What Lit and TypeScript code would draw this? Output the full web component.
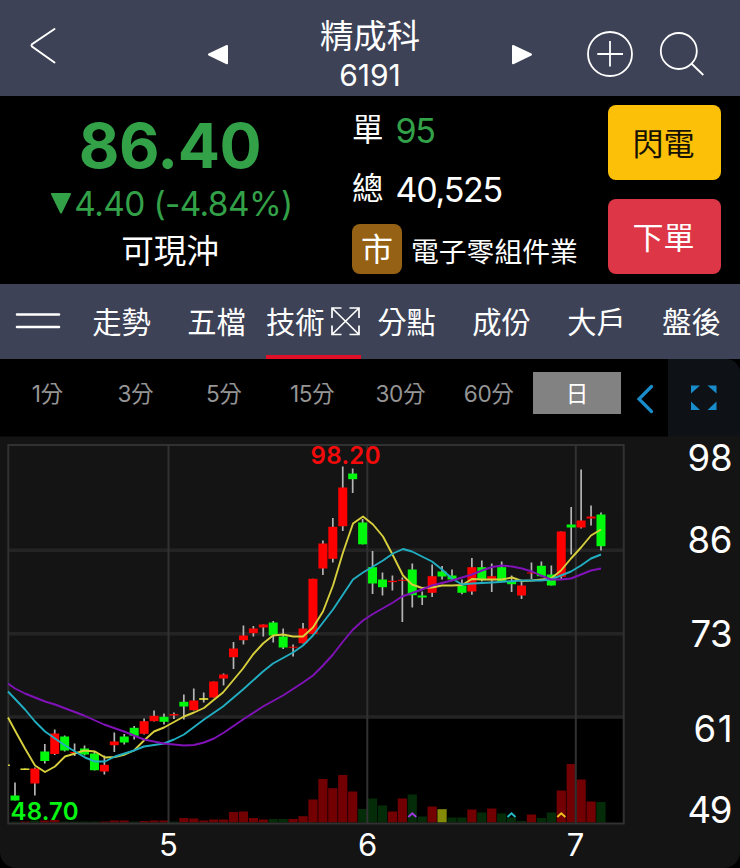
import { LitElement, html, svg, css } from "lit";
import { customElement } from "lit/decorators.js";
import { classMap } from "lit/directives/class-map.js";

type Kind = "r" | "g" | "y";
// [kind, body top, body bottom, high, low, volume kind, volume top]
type Candle = [Kind, number, number, number, number, Kind, number];

const CANDLES: Candle[] = [
  ["g", 795, 800, 782, 800, "g", 821],
  ["y", 768, 769.4, 768, 769, "r", 821],
  ["r", 768, 783, 767, 795, "g", 820],
  ["g", 751, 760.5, 743.5, 763, "r", 820],
  ["r", 733, 753.5, 729, 754.5, "r", 819.5],
  ["g", 736, 750, 735, 751, "g", 821],
  ["r", 751.5, 752.5, 743, 755.5, "g", 821],
  ["g", 748, 754, 745, 755, "g", 821],
  ["g", 753, 769.7, 751, 770, "g", 821],
  ["r", 764.3, 771, 755, 774, "r", 821],
  ["r", 741, 744.7, 732, 751.5, "r", 820],
  ["g", 736, 742, 733.5, 744, "r", 820],
  ["g", 727.3, 735.3, 725.5, 739, "g", 821],
  ["r", 720.7, 733.3, 718, 734, "r", 820.5],
  ["r", 715.3, 720.7, 710, 721, "r", 820],
  ["g", 716.3, 721.3, 713, 724, "r", 820],
  ["r", 713.6, 715, 712, 718.5, "g", 821],
  ["g", 701.3, 706, 694, 719, "r", 817.5],
  ["r", 700, 709.7, 688, 710, "r", 818],
  ["y", 697.7, 699.3, 692, 702, "r", 820],
  ["r", 681, 697, 681, 697, "r", 819],
  ["r", 674, 678, 673, 685, "r", 819],
  ["r", 648, 656.7, 641.5, 668.5, "r", 811.5],
  ["r", 635, 639.7, 625, 644, "r", 811],
  ["r", 628, 632.7, 625.5, 636, "r", 817.5],
  ["r", 624, 627, 624, 636, "r", 819],
  ["g", 622, 635, 620.5, 642, "g", 818.5],
  ["g", 636, 647, 628, 648.5, "g", 818.5],
  ["r", 646.2, 647.2, 644, 656, "r", 818.5],
  ["r", 628, 642.7, 622.5, 643, "r", 815.7],
  ["r", 578.3, 633.5, 578.3, 634, "r", 799],
  ["r", 543, 568, 540, 574.5, "r", 778.5],
  ["r", 526.3, 558.3, 517.5, 562, "r", 787.7],
  ["r", 487, 525.7, 466, 530.5, "r", 774.5],
  ["g", 473, 478.7, 468, 492.5, "r", 791],
  ["g", 522, 543.8, 518.5, 544, "g", 808.5],
  ["g", 566.7, 583, 550.5, 593.5, "g", 798],
  ["g", 579, 586.7, 572, 595, "g", 805],
  ["r", 580.3, 581.6, 575, 590, "r", 811],
  ["r", 579.3, 580.3, 577, 621.5, "r", 798],
  ["g", 569, 594.7, 563, 607, "g", 794],
  ["g", 595, 597, 591, 604.5, "g", 816],
  ["r", 575.7, 592.3, 564, 596.5, "r", 806],
  ["g", 571, 576, 565.5, 579, "y", 808.7],
  ["g", 575, 579, 569, 579, "g", 817],
  ["g", 585, 592.3, 579, 593.7, "g", 817],
  ["r", 566.7, 591, 557.5, 594.3, "r", 809],
  ["g", 566.7, 579.7, 560, 581, "g", 812],
  ["r", 575.7, 579.7, 563, 591.5, "r", 808],
  ["g", 566.7, 581, 561, 581, "g", 813],
  ["g", 581, 583.7, 575, 591.5, "g", 817],
  ["r", 585, 595, 580, 598.5, "g", 820.5],
  ["r", 572, 573, 562, 578.5, "r", 814],
  ["g", 565.3, 575.7, 561, 576, "g", 817.5],
  ["g", 574, 585, 565, 585, "g", 812],
  ["r", 531, 576.3, 531, 579, "r", 790],
  ["g", 524, 527, 506.5, 554, "r", 763.5],
  ["r", 520, 527, 469, 528, "r", 779],
  ["r", 516, 518, 505, 525, "r", 801],
  ["g", 514, 545.7, 512, 550, "g", 801.5],
];

const MA_SHORT = "8,717 15,730 25,748 35,765 45,771.5 55,766 65,756 75,753 84,750 95,751 105,757 115,756.5 125,754 134,750 144,740 154,731 164,727 174,721.5 184,716 194,712 204,707.5 213,700 223,692 233,680 243,668 253,654 263,643 273,635 283,634 293,636 303,636 313,627 323,611 333,585 343,552 353,523 363,516 373,524 383,536 393,555 403,575 412,584 422,587.5 432,587 442,585 452,585 462,584.5 472,578.5 482,579 502,579 512,577 522,580.5 532,580 551,578 561,570 571,558 581,547 591,535 601,529";
const MA_MID = "8,691 25,709 35,721 45,731 55,738 65,745 75,751 85,757 95,761 105,761 115,756 134,750 144,746 164,743 174,739 184,734 204,719 223,706 243,689 263,671 273,663 293,652 303,645 313,635 323,622 333,609 343,594 353,579 363,572 373,566 383,560 393,553 403,548.5 412,551 432,561 442,569 452,578 462,584 472,583 492,582 522,580 541,580 551,579 561,575 571,571 581,565 591,558 601,554";
const MA_LONG = "8,683 15,688 25,693 45,701 55,704 84,715 104,724 124,731 144,739 164,743 184,745 194,744.5 204,742 214,738 224,732 243,719 263,706 283,695 303,682 313,675 323,665 333,654 343,641 353,629 363,620 372,614 393,602 402,596 422,589 432,585 452,580 472,574 482,570 492,566.5 502,565 512,566 522,568 532,571 541,575 551,579 561,579 571,578 581,574 591,570 601,568";

const BODY = { r: "#fe0000", g: "#00f80c", y: "#f4f03a" };
const VOLUME = { r: "#720003", g: "#042c08", y: "#858a07" };
const xOf = (i: number) => 15 + i * 9.932;

@customElement("stock-header")
class StockHeader extends LitElement {
  static styles = css`
    :host { display: grid; grid-template-columns: 180px 76px 228px 76px 180px; height: 95.5px; background: #3d4256; color: #fff; }
    .title { display: flex; flex-direction: column; align-items: center; padding-top: 16px; }
    .name { font-size: 33.4px; line-height: 40px; }
    .code { font-size: 30px; line-height: 38px; }
    svg { display: block; fill: none; stroke: #fff; }
    .solid { fill: #fff; stroke-linejoin: round; stroke-width: 2; }
  `;
  render() {
    return html`
      <svg width="180" height="95"><path d="M54.5 29 32 44.2Q31 45.5 32 46.6L54.5 62.5" stroke-width="2" stroke-linecap="round"/></svg>
      <svg class="solid" width="76" height="95"><path d="M29 54.5 47 46V63.3Z"/></svg>
      <div class="title"><div class="name">精成科</div><div class="code">6191</div></div>
      <svg class="solid" width="76" height="95"><path d="M47 54.5 29 46V63.3Z"/></svg>
      <svg width="180" height="95" stroke-width="1.8">
        <circle cx="50" cy="54" r="22"/><path d="M50 41V66.5M37.3 54H63"/>
        <circle cx="118.8" cy="51" r="18"/><path d="M131.4 63.5 143.3 75"/>
      </svg>`;
  }
}

@customElement("stock-quote")
class StockQuote extends LitElement {
  static styles = css`
    :host { display: grid; grid-template-columns: 342px 266px 113px; height: 188px; background: #000; color: #fff; }
    .price { display: flex; flex-direction: column; align-items: center; color: #33a148; padding-top: 8px; }
    .last { font-size: 62.5px; line-height: 82px; font-weight: 700; letter-spacing: -0.4px; margin-right: 2px; }
    .change { display: flex; align-items: center; font-size: 33.4px; line-height: 36px; letter-spacing: -0.6px; white-space: pre; }
    .flag { color: #fff; font-size: 32.6px; line-height: 40px; margin-top: 9px; margin-right: 2px; }
    .info { display: flex; flex-direction: column; padding: 10px 0 0 10px; }
    .row { display: flex; align-items: center; gap: 12px; height: 50px; font-size: 31.5px; }
    .label { line-height: 40px; margin-bottom: 1px; }
    .total { margin-top: 9px; }
    .value { font-size: 34px; letter-spacing: -1.25px; }
    .down { color: #33a148; }
    .sector { gap: 9px; margin-top: 9px; font-size: 27.8px; }
    .badge { width: 50px; height: 50px; border-radius: 8px; background: #956215; font-size: 32px; line-height: 51px; text-align: center; }
    .industry { padding-top: 2px; }
    .actions { display: flex; flex-direction: column; gap: 19px; padding-top: 9.5px; }
    .btn { height: 75px; border-radius: 8px; font-size: 31px; line-height: 77px; text-indent: -2px; text-align: center; }
    .flash { background: #fcc008; color: #161203; }
    .order { background: #dd3647; }
  `;
  render() {
    return html`
      <div class="price">
        <div class="last">86.40</div>
        <div class="change"><svg width="25" height="36"><path d="M3 8H21L12 26.5Z" fill="#33a148" stroke="#33a148" stroke-width="2" stroke-linejoin="round"/></svg>4.40 (-4.84%)</div>
        <div class="flag">可現沖</div>
      </div>
      <div class="info">
        <div class="row"><span class="label">單</span><span class="value down">95</span></div>
        <div class="row total"><span class="label">總</span><span class="value">40,525</span></div>
        <div class="row sector"><span class="badge">市</span><span class="industry">電子零組件業</span></div>
      </div>
      <div class="actions"><div class="btn flash">閃電</div><div class="btn order">下單</div></div>`;
  }
}

@customElement("stock-tabs")
class StockTabs extends LitElement {
  static styles = css`
    :host { display: grid; grid-template-columns: 74px repeat(7, 95px); height: 75.5px; background: #3d4256; color: #fff; font-size: 29.3px; line-height: 78px; }
    .tab { display: flex; justify-content: center; box-sizing: border-box; height: 75.5px; }
    .active { justify-content: space-between; border-bottom: 4px solid #e01029; margin: 0 -2px 0 2px; }
    svg { display: block; fill: none; stroke: #fff; }
  `;
  render() {
    const tabs = ["走勢", "五檔", "技術", "分點", "成份", "大戶", "盤後"];
    return html`
      <svg width="74" height="75"><path d="M17 30.5H59M17 43H59" stroke-width="2.6" stroke-linecap="round"/></svg>
      ${tabs.map((t, i) => html`<div class=${classMap({ tab: true, active: i === 2 })}>${t}${i === 2
        ? html`<svg width="31" height="70" stroke-width="1.7"><path d="M2 24 29 50.5M29 24 2 50.5M2 34V24H11.5M19.5 24H29V34M29 41.5V50.5H19.5M11.5 50.5H2V41.5"/></svg>`
        : ""}</div>`)}`;
  }
}

@customElement("period-bar")
class PeriodBar extends LitElement {
  static styles = css`
    :host { display: grid; grid-template-columns: 621px 47px 72px; height: 76.5px; background: #000; color: #959595; }
    .list { display: grid; grid-template-columns: repeat(7, 88.3px); margin-left: 3px; padding-top: 13px; font-size: 22.6px; line-height: 43px; text-align: center; }
    .cell { height: 41.5px; letter-spacing: -0.4px; }
    .active { background: #828282; color: #fff; }
    .full { background: #0e1216; border-top-right-radius: 14px; }
    svg { display: block; }
  `;
  render() {
    const items = ["1分", "3分", "5分", "15分", "30分", "60分", "日"];
    return html`
      <div class="list">${items.map((t, i) => html`<div class=${classMap({ cell: true, active: i === 6 })}>${t}</div>`)}</div>
      <svg width="47" height="76"><path d="M30.5 27.5 18 40 30.5 52.5" fill="none" stroke="#198ccb" stroke-width="3.2" stroke-linecap="round"/></svg>
      <div class="full"><svg width="72" height="76" fill="#198ccb"><path d="M23 26.5h9l-9 8zM48.5 26.5h-9l9 8zM23 51h9l-9-8.5zM48.5 51h-9l9-8.5z"/></svg></div>`;
  }
}

@customElement("stock-chart")
class StockChart extends LitElement {
  static styles = css`
    :host { display: block; height: 432.5px; background: #000; }
    svg { display: block; background: #141414; border-radius: 0 0 16px 16px; }
    .grid { fill: none; stroke: #313131; stroke-width: 2; }
    .level { fill: none; stroke: #242424; stroke-width: 3.4; }
    .wick { stroke: #b5b5b5; stroke-width: 1.7; }
    .ma { fill: none; stroke-width: 1.9; stroke-linejoin: round; }
    .axis { fill: #fff; font-size: 36.5px; text-anchor: end; }
    .month { fill: #fff; font-size: 31px; text-anchor: middle; }
    .mark { font-size: 24px; font-weight: 600; }
    .sign { fill: none; stroke-width: 2; }
  `;
  render() {
    const axis: [string, number, number][] = [["98", 470.5, 45], ["86", 552.5, 45], ["73", 646.5, 42], ["61", 741, 39], ["49", 822.5, 45]];
    const months: [string, number][] = [["5", 168.5], ["6", 367.5], ["7", 575.5]];
    const signs: [number, string][] = [[412.3, "#a03ae0"], [511.5, "#25b9c4"], [561.3, "#ecc51c"]];
    return html`<svg width="740" height="432.5" viewBox="0 435.5 740 432.5">
      <rect x="0" y="435.5" width="668" height="1" fill="#0a0a0a"/>
      <rect x="8" y="716" width="616" height="107" fill="#000"/>
      ${CANDLES.map((c, i) => svg`<rect x=${xOf(i) - 4.6} y=${c[6]} width="9.2" height=${822 - c[6]} fill=${VOLUME[c[5]]}/>`)}
      <path class="level" d="M8 549.8H624M8 633.2H624M8 716.5H624"/>
      <path class="grid" d="M8.3 444.5H623.7V823H8.3ZM168.5 445V823M367.3 445V823M575.8 445V823"/>
      ${CANDLES.map((c, i) => svg`
        <line class="wick" x1=${xOf(i)} x2=${xOf(i)} y1=${c[3]} y2=${c[4]}/>
        <rect x=${xOf(i) - 4.5} y=${c[1]} width="9" height=${c[2] - c[1]} fill=${BODY[c[0]]}/>`)}
      <polyline class="ma" stroke="#d8cf3d" points=${MA_SHORT}/>
      <polyline class="ma" stroke="#22aec2" points=${MA_MID}/>
      <polyline class="ma" stroke="#8012b8" points=${MA_LONG}/>
      <rect x="8" y="764" width="2" height="1.5" fill="#d8cf3d"/>
      ${signs.map(([x, c]) => svg`<path class="sign" stroke=${c} d="M${x - 4} 816.5 L${x} 812.8 L${x + 4} 816.5"/>`)}
      <text class="mark" x="310.5" y="463.5" textLength="70" fill="#f30a0a">98.20</text>
      <text class="mark" x="10.5" y="819" textLength="68" fill="#06f512">48.70</text>
      ${axis.map(([t, y, w]) => svg`<text class="axis" x="732.5" y=${y} textLength=${w}>${t}</text>`)}
      ${months.map(([t, x]) => svg`<text class="month" x=${x} y="855.5">${t}</text>`)}
    </svg>`;
  }
}

@customElement("app-root")
class AppRoot extends LitElement {
  static styles = css`
    :host { display: flex; flex-direction: column; width: 740px; height: 868px; overflow: hidden; background: #000; font-family: Inter, "Noto Sans CJK TC", sans-serif; }
  `;
  render() {
    return html`<stock-header></stock-header><stock-quote></stock-quote><stock-tabs></stock-tabs><period-bar></period-bar><stock-chart></stock-chart>`;
  }
}
